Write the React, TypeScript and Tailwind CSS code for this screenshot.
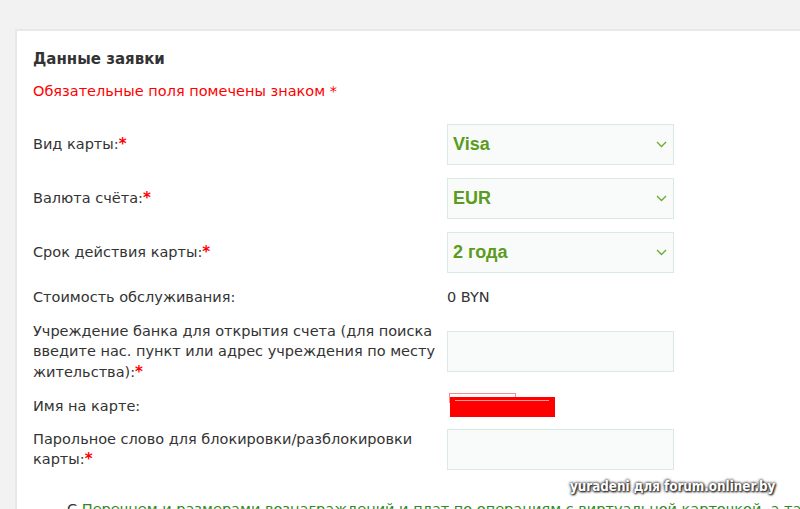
import React from "react";

const Star = () => <span className="text-[#ff0000] font-bold text-[15px]">*</span>;

function Chevron() {
  return (
    <svg width="11" height="7" viewBox="0 0 11 7" className="shrink-0">
      <polyline points="1,1 5.5,5.5 10,1" fill="none" stroke="#6aaa2a" strokeWidth="1.3" />
    </svg>
  );
}

function Select({ value }: { value: string }) {
  return (
    <div className="w-[227px] h-[41px] border border-[#d8ebe3] bg-[#f9fbfa] flex items-center justify-between pl-[5px] pr-[6px]">
      <span className="text-[18px] font-bold text-[#5a9b20]" style={{ fontFamily: '"Liberation Sans", Arial, sans-serif' }}>
        {value}
      </span>
      <Chevron />
    </div>
  );
}

function Input() {
  return <div className="w-[227px] h-[41px] border border-[#d8ebe3] bg-[#f9fbfa]" />;
}

export default function App() {
  return (
    <div
      className="w-[800px] h-[509px] overflow-hidden bg-[#f2f2f2] relative"
      style={{ fontFamily: '"DejaVu Sans", Verdana, sans-serif' }}
    >
      <div className="ml-[15px] mt-[29px] border-t-2 border-l-2 border-[#e8e8e8] bg-white h-[600px] pl-[16px] pt-[18px] text-[14.5px] text-[#333333] leading-[20.5px]">
        <div className="font-bold text-[15px] text-[#333]">Данные заявки</div>
        <div className="mt-[11px] text-[#ff0000]">Обязательные поля помечены знаком *</div>

        <div className="mt-[23px] flex flex-col">
          <div className="flex items-center">
            <div className="w-[414px]">
              Вид карты:<Star />
            </div>
            <Select value="Visa" />
          </div>
          <div className="flex items-center mt-[13px]">
            <div className="w-[414px]">
              Валюта счёта:<Star />
            </div>
            <Select value="EUR" />
          </div>
          <div className="flex items-center mt-[13px]">
            <div className="w-[414px]">
              Срок действия карты:<Star />
            </div>
            <Select value="2 года" />
          </div>
          <div className="flex items-center mt-[14px]">
            <div className="w-[414px]">Стоимость обслуживания:</div>
            <div>0 BYN</div>
          </div>
          <div className="flex items-center mt-[13px]">
            <div className="w-[414px] pr-[6px]">
              Учреждение банка для открытия счета (для поиска введите нас. пункт или адрес учреждения по месту жительства):
              <Star />
            </div>
            <Input />
          </div>
          <div className="flex items-center mt-[14px]">
            <div className="w-[414px]">Имя на карте:</div>
            <div className="relative w-[227px] h-[20px]">
              <div className="absolute left-[2px] top-[-3px] w-[67px] h-[10px] border border-[#ff8a8a] border-b-0" />
              <div className="absolute left-[3px] top-[1px] w-[105px] h-[20px] bg-[#ff0000]" />
              <div className="absolute left-[8px] top-[4px] w-[94px] h-px bg-[#ff9a9a]" />
            </div>
          </div>
          <div className="flex items-center mt-[12px]">
            <div className="w-[414px] pr-[6px]">
              Парольное слово для блокировки/разблокировки карты:<Star />
            </div>
            <Input />
          </div>
          <div className="mt-[29px] pl-[34px] whitespace-nowrap">
            С <span className="text-[#2f8a1e]">Перечнем и размерами вознаграждений и плат по операциям с виртуальной карточкой, а также</span>
          </div>
        </div>
      </div>

      <div
        className="absolute left-[570px] top-[477px] text-white font-bold text-[13.3px] whitespace-nowrap"
        style={{
          fontFamily: '"DejaVu Sans Condensed", "DejaVu Sans", sans-serif',
          textShadow: "0 0 3px #333, 0 0 3px #333, 1px 1px 2px #000",
        }}
      >
        yuradeni для forum.onliner.by
      </div>
    </div>
  );
}
